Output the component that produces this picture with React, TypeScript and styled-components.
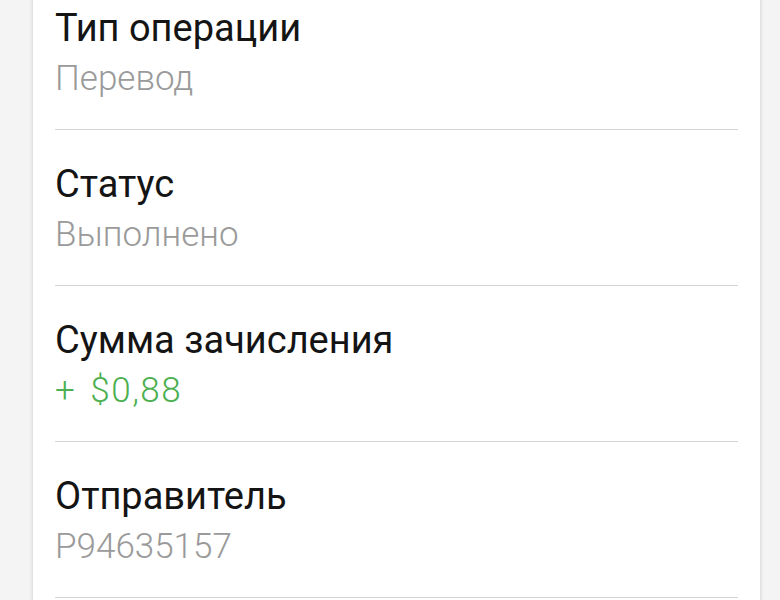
import React from "react";
import styled, { createGlobalStyle } from "styled-components";

const GlobalStyle = createGlobalStyle`
  html, body {
    margin: 0;
    padding: 0;
    background: #f4f4f4;
    overflow: hidden;
  }
  body {
    font-family: Roboto, "Noto Sans", "Liberation Sans", sans-serif;
  }
`;

const Page = styled.div`
  height: 600px;
  overflow: hidden;
  padding: 0 20px 0 33px;
`;

const Card = styled.div`
  margin-top: -26px;
  min-height: 700px;
  background: #ffffff;
  box-shadow: 0 0 4px rgba(0, 0, 0, 0.18);
  padding: 0 22px;
`;

const Row = styled.div`
  padding: 29px 0 25px;
  border-bottom: 1px solid #d4d4d4;
`;

const Label = styled.div`
  font-size: 38px;
  line-height: 50px;
  color: #141414;
  white-space: nowrap;
`;

const Value = styled.div<{ $positive?: boolean }>`
  margin-top: 1px;
  font-size: 35px;
  font-weight: 300;
  line-height: 50px;
  color: ${(p) => (p.$positive ? "#4caf50" : "#9a9a9a")};
  white-space: nowrap;
  word-spacing: ${(p) => (p.$positive ? "4px" : "0")};
  letter-spacing: ${(p) => (p.$positive ? "1.5px" : "0")};
`;

const items: { label: string; value: string; positive?: boolean }[] = [
  { label: "Тип операции", value: "Перевод" },
  { label: "Статус", value: "Выполнено" },
  { label: "Сумма зачисления", value: "+ $0,88", positive: true },
  { label: "Отправитель", value: "P94635157" },
];

export default function App() {
  return (
    <>
      <GlobalStyle />
      <Page>
        <Card>
          {items.map((it) => (
            <Row key={it.label}>
              <Label>{it.label}</Label>
              <Value $positive={it.positive}>{it.value}</Value>
            </Row>
          ))}
        </Card>
      </Page>
    </>
  );
}
